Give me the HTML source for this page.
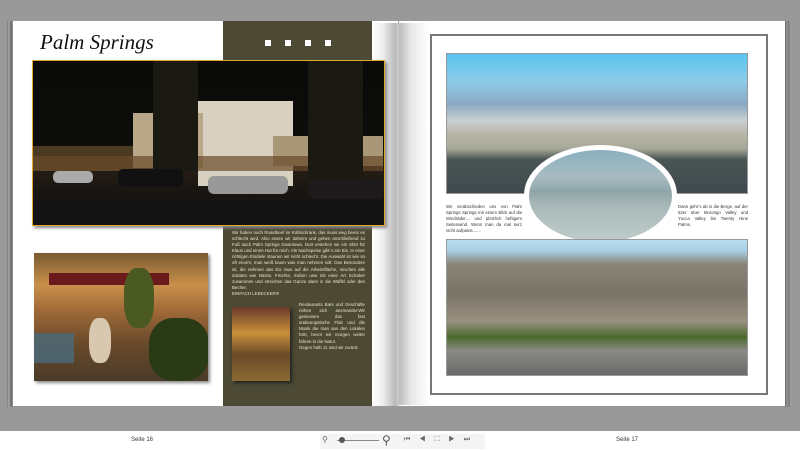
<!DOCTYPE html>
<html><head><meta charset="utf-8"><style>
*{margin:0;padding:0;box-sizing:border-box}
body{width:800px;height:450px;background:#999;position:relative;overflow:hidden;font-family:"Liberation Sans",sans-serif}
.a{position:absolute}
.t{font-size:4.4px;line-height:6.1px;color:#e8e4d0;text-align:justify}
.rt{font-size:4.3px;line-height:5.9px;color:#333;text-align:justify}
</style></head><body>
<!-- left page -->
<div class="a" style="left:7px;top:21px;width:6px;height:386px;background:linear-gradient(90deg,#777,#aaa,#666,#999)"></div>
<div class="a" style="left:13px;top:21px;width:385px;height:385px;background:#fff"></div>
<div class="a" style="left:372px;top:23px;width:27px;height:383px;background:linear-gradient(90deg,#fff,#eee 40%,#bbb 85%,#ccc)"></div>
<div class="a" style="left:223px;top:21px;width:149px;height:385px;background:#4c4a34"></div>
<div class="a" style="left:40px;top:30px;font-family:'Liberation Serif',serif;font-style:italic;font-size:21px;color:#111">Palm Springs</div>
<div class="a" style="left:265px;top:40px;width:6px;height:6px;background:#fff"></div>
<div class="a" style="left:285px;top:40px;width:6px;height:6px;background:#fff"></div>
<div class="a" style="left:305px;top:40px;width:6px;height:6px;background:#fff"></div>
<div class="a" style="left:325px;top:40px;width:6px;height:6px;background:#fff"></div>
<div class="a" style="left:32px;top:60px;width:353px;height:166px;border:1.5px solid #e0a630;box-shadow:2px 2px 3px #888;overflow:hidden;background:linear-gradient(180deg,#0a0a08 0,#0c0c0a 50%,#2a2016 62%,#1a1612 78%,#0e0e0e 100%)">
 <div class="a" style="left:165px;top:40px;width:95px;height:85px;background:#d8d0c0"></div>
 <div class="a" style="left:100px;top:52px;width:70px;height:55px;background:#b8a888"></div>
 <div class="a" style="left:240px;top:75px;width:110px;height:30px;background:#a89878"></div>
 <div class="a" style="left:0;top:85px;width:100px;height:25px;background:#4a3a22"></div>
 <div class="a" style="left:0;top:95px;width:350px;height:15px;background:#6a4a2a;opacity:.7"></div>
 <div class="a" style="left:120px;top:0;width:45px;height:110px;background:#1a1a12"></div>
 <div class="a" style="left:275px;top:0;width:55px;height:120px;background:#1a1a12"></div>
 <div class="a" style="left:20px;top:110px;width:40px;height:12px;border-radius:5px;background:#aaa"></div>
 <div class="a" style="left:85px;top:108px;width:65px;height:18px;border-radius:5px;background:#111"></div>
 <div class="a" style="left:175px;top:115px;width:80px;height:18px;border-radius:6px;background:#999"></div>
 <div class="a" style="left:275px;top:118px;width:75px;height:20px;border-radius:6px;background:#1c1a1a"></div>
 <div class="a" style="left:0;top:140px;width:353px;height:26px;background:#141414"></div>
</div>
<div class="a" style="left:34px;top:253px;width:174px;height:128px;box-shadow:2px 2px 3px #888;overflow:hidden;background:linear-gradient(180deg,#7a5a30 0,#c8904a 25%,#a06a38 45%,#6a4a2a 70%,#4a3a2a 100%)">
 <div class="a" style="left:15px;top:20px;width:120px;height:12px;background:#6a1a1a"></div>
 <div class="a" style="left:90px;top:15px;width:30px;height:60px;border-radius:40%;background:#4a5a22"></div>
 <div class="a" style="left:115px;top:65px;width:60px;height:63px;border-radius:40%;background:#2a3a14"></div>
 <div class="a" style="left:0;top:80px;width:40px;height:30px;background:#4a6a7a;opacity:.8"></div>
 <div class="a" style="left:55px;top:65px;width:22px;height:45px;border-radius:40%;background:#d8c8b0"></div>
</div>
<div class="a t" style="left:232px;top:230px;width:133px">Wir haben noch Roastbeef im Kühlschrank, das muss weg bevor es schlecht wird. Also essen wir daheim und gehen anschließend zu Fuß nach Palm Springs Downtown. Dort erstehen wir ein Shirt für Klaus und einen Hut für mich. Als Nachspeise gibt´s ein Eis. In einer richtigen Eisdiele staunen wir nicht schlecht. Die Auswahl ist wie so oft enorm, man weiß kaum was man nehmen soll. Das Besondere ist, die nehmen das Eis raus auf die Arbeitsfläche, mischen alle Zutaten wie Nüsse, Früchte, Soßen usw mit einer Art Schaber zusammen und streichen das Ganze dann in die Waffel oder den Becher.<br>EINFACH LEEECKER!!!</div>
<div class="a" style="left:232px;top:307px;width:58px;height:74px;box-shadow:2px 2px 3px #222;background:linear-gradient(180deg,#6a3a2a 0,#c8903a 35%,#6a4a2a 65%,#8a6a30 100%)"></div>
<div class="a t" style="left:299px;top:302px;width:66px">Restaurants Bars und Geschäfte reihen sich aneinander.Wir geniessen das fast südeuropäische Flair und die Musik die man aus den Lokalen hört, bevor wir morgen weiter fahren in die Natur.<br>Gegen halb 11 sind wir zurück</div>
<!-- right page -->
<div class="a" style="left:399px;top:21px;width:386px;height:385px;background:#fff"></div>
<div class="a" style="left:399px;top:23px;width:30px;height:382px;background:linear-gradient(90deg,#bbb,#e8e8e8 40%,#fff)"></div>
<div class="a" style="left:785px;top:21px;width:6px;height:386px;background:linear-gradient(90deg,#666,#999,#777,#aaa)"></div>
<div class="a" style="left:430px;top:34px;width:338px;height:361px;border:2px solid #777"></div>
<div class="a" style="left:446px;top:53px;width:302px;height:141px;border:1px solid #999;background:
linear-gradient(180deg,#5ac4ec 0,#8ccbe8 20%,#8aa8c4 36%,#c8d0d0 48%,#b8b4a4 58%,#a8a898 68%,#4a5454 76%,#3e4a4e 100%)"></div>
<div class="a" style="left:446px;top:145px;width:302px;height:94px;overflow:hidden">
 <div class="a" style="left:78px;top:0;width:153px;height:100px;border-radius:50%;background:#fff"></div>
 <div class="a" style="left:83px;top:5px;width:143px;height:92px;border-radius:50%;background:linear-gradient(180deg,#8ab0c0 0,#a8bcc0 30%,#8ea4a8 45%,#a8b8b8 60%,#c0cccc 100%)"></div>
</div>
<div class="a" style="left:446px;top:239px;width:302px;height:137px;border:1px solid #999;background:
linear-gradient(180deg,#b8ddf0 0,#a8cfe6 8%,#8a8478 18%,#7a7468 40%,#9a9080 60%,#4a6a30 72%,#8a8a84 82%,#6a6a6a 100%)"></div>
<div class="a rt" style="left:446px;top:204px;width:76px">Wir verabschieden uns von Palm Springs Springs mit einem Blick auf die Windräder.... und plötzlich heftigem Seitenwind. Wenn man da mal kurz nicht aufpasst.......</div>
<div class="a rt" style="left:678px;top:204px;width:70px">Dann geht´s ab in die Berge, auf der 62er über Morongo Valley und Yucca Valley bis Twenty Nine Palms.</div>
<!-- bottom bar -->
<div class="a" style="left:0;top:431px;width:800px;height:19px;background:#fff"></div>
<div class="a" style="left:131px;top:437px;font-size:6px;color:#333">Seite 16</div>
<div class="a" style="left:616px;top:437px;font-size:6px;color:#333">Seite 17</div>
<div class="a" style="left:320px;top:434px;width:165px;height:15px;background:#f4f4f4"></div>
<div class="a" style="left:322px;top:435px;font-size:8px;color:#666">⚲</div>
<div class="a" style="left:337px;top:440px;width:42px;height:1px;background:#888"></div>
<div class="a" style="left:339px;top:437px;width:6px;height:6px;border-radius:50%;background:#555"></div>
<div class="a" style="left:382px;top:433px;font-size:12px;color:#555">⚲</div>
<div class="a" style="left:404px;top:436px;font-size:7px;color:#666;letter-spacing:9px">⏮◀⛶▶⏭</div>
</body></html>
